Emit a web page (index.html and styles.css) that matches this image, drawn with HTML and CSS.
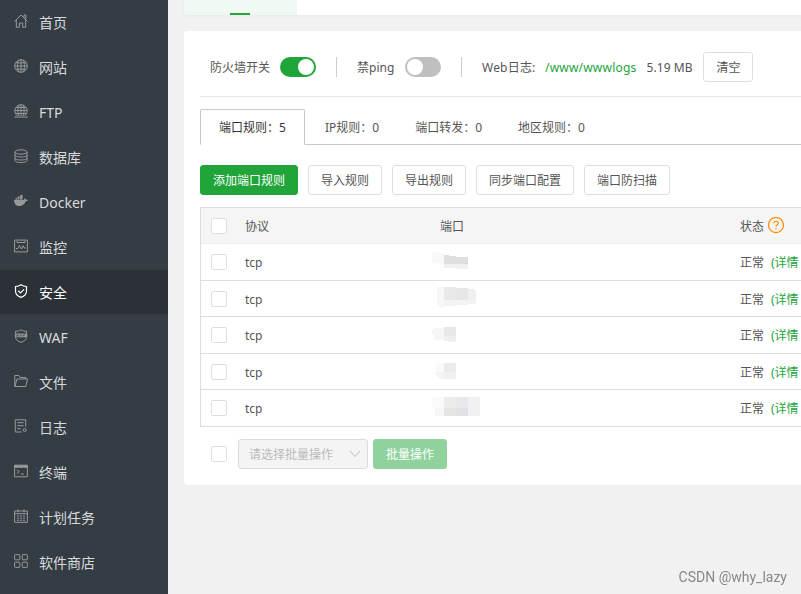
FILE: index.html
```
<!DOCTYPE html>
<html lang="zh-CN">
<head>
    <meta charset="UTF-8">
    <meta name="viewport" content="width=device-width, initial-scale=1.0">
    <title>安全</title>
    <link rel="stylesheet" href="styles.css">
</head>
<body>
    <nav class="sidebar">
        <ul class="menu">
            <li class="menu-item"><svg viewBox="0 0 14 14"><path d="M.7 7.3 7 1l6.3 6.3M2.3 6v7.3h3V9h3.400v4.300h3V6M10 3.600V1h1.800v4.200"/></svg><span>首页</span></li>
            <li class="menu-item"><svg viewBox="0 0 14 14"><circle cx="7" cy="7" r="6.300"/><path d="M7 .7v12.600M.7 7h12.600M1.800 3.800h10.400M1.800 10.200h10.400M5 1C3 4.500 3 9.500 5 13M9 1c2 3.500 2 8.500 0 12"/></svg><span>网站</span></li>
            <li class="menu-item"><svg viewBox="0 0 14 14"><path d="M3.500 12A6.200 6.200 0 1 1 10.500 12M7 .8v11.400M.8 6.500h12.400M2 9.500h10M2.300 3.500h9.400M5 1.200C3.400 4.500 3.400 9 5 12M9 1.200c1.600 3.300 1.600 7.800 0 10.800M.3 13h13.400"/></svg><span>FTP</span></li>
            <li class="menu-item"><svg viewBox="0 0 14 14"><ellipse cx="7" cy="3" rx="6" ry="2.200"/><path d="M1 3v8.500c0 1.200 2.700 2 6 2s6-.8 6-2V3M1 6c0 1.200 2.700 2 6 2s6-.8 6-2M1 9c0 1.200 2.700 2 6 2s6-.8 6-2"/></svg><span>数据库</span></li>
            <li class="menu-item"><svg viewBox="0 0 14 14"><path class="solid" d="M0 6h1.500V4h2V2.500h3V.8h2V6h1.200c.5 0 .8-.8.5-2 .9.400 1.400 1 1.500 1.600 1-.2 1.700 0 2.200.400-.4.900-1.200 1.300-2.300 1.300C10.400 10.600 8.300 12 5.300 12 1.800 12 .2 9.800 0 6z"/><path class="cut" d="M3.500 4v2M5.500 3v3M1.500 5.200h7"/></svg><span>Docker</span></li>
            <li class="menu-item"><svg viewBox="0 0 14 14"><path d="M.6 1.100h12.800v11.800H.6zM3 2v1.500h8V2M2 9.500h2l1.500-3 2 3.500 1.700-3.300 1 2.300H12"/></svg><span>监控</span></li>
            <li class="menu-item active"><svg viewBox="0 0 14 14"><path d="M7 .7c1.600 1.200 3.400 1.700 5.500 1.800v4.700c0 3-2.300 5-5.500 6.200C3.800 12.200 1.500 10.200 1.500 7.200V2.500C3.600 2.400 5.400 1.900 7 .7zM4.200 6.700l2.300 2.200 3.500-3.600"/></svg><span>安全</span></li>
            <li class="menu-item"><svg viewBox="0 0 14 14"><path d="M1.500 4.500V2.300C3.700 2.300 5.400 1.800 7 .8c1.600 1 3.300 1.500 5.500 1.500v2.200M1.500 8.500c.3 2.300 2.400 3.900 5.500 4.900 3.100-1 5.200-2.600 5.500-4.900"/><path class="solid" d="M.8 4.500h12.400v3.800H.8z"/><path class="cut" d="m2 5.500.8 2 .8-2 .8 2 .8-2M6.200 7.500l.8-2 .8 2M9.300 7.500v-2h2M9.300 6.500h1.500"/></svg><span>WAF</span></li>
            <li class="menu-item"><svg viewBox="0 0 14 14"><path d="M.8 12.500V1.500h4l1.500 2h5.400V5M.8 12.500h11L13.500 5H3L.8 12.500"/></svg><span>文件</span></li>
            <li class="menu-item"><svg viewBox="0 0 14 14"><path d="M7.500 13H1.300V.8h10.400v7M3.300 3.700h6.400M3.300 6.700h6.400M3.300 9.700h3.400"/><circle cx="10.700" cy="11" r="1.500"/></svg><span>日志</span></li>
            <li class="menu-item"><svg viewBox="0 0 14 14"><path d="M.6 1.200h12.800v11.600H.6zM3 6l2.300 1.700L3 9.500M6.800 10H10"/><path class="solid" d="M.6 1.200h12.800v2.600H.6z"/></svg><span>终端</span></li>
            <li class="menu-item"><svg viewBox="0 0 14 14"><path d="M.6 2h12.800v11.300H.6zM4 .3v3M10 .3v3M.6 4.700h12.800M3 7h2M6 7h2M9 7h2M3 9.200h2M6 9.200h2M9 9.200h2M3 11.300h2M6 11.300h2M9 11.300h2"/></svg><span>计划任务</span></li>
            <li class="menu-item"><svg viewBox="0 0 14 14"><rect x=".6" y=".6" width="5.200" height="5.200" rx=".7"/><rect x="8.200" y=".6" width="5.200" height="5.200" rx=".7"/><rect x=".6" y="8.200" width="5.200" height="5.200" rx=".7"/><rect x="8.200" y="8.200" width="5.200" height="5.200" rx=".7"/></svg><span>软件商店</span></li>
        </ul>
    </nav>

    <main class="main">
        <div class="top-tabs"><div class="top-tab"></div></div>

        <section class="card">
            <!-- 防火墙开关 -->
            <div class="status-bar">
                <span>防火墙开关</span>
                <i class="switch on"></i>
                <i class="divider"></i>
                <span class="ping">禁ping</span>
                <i class="switch"></i>
                <i class="divider"></i>
                <span class="log-label">Web日志:</span>
                <a class="link log-path">/www/wwwlogs</a>
                <span class="log-size">5.19 MB</span>
                <button class="btn">清空</button>
            </div>

            <div class="tabs">
                <div class="tab active">端口规则：5</div>
                <div class="tab">IP规则：0</div>
                <div class="tab">端口转发：0</div>
                <div class="tab">地区规则：0</div>
            </div>

            <div class="buttons">
                <button class="btn btn-primary">添加端口规则</button>
                <button class="btn">导入规则</button>
                <button class="btn">导出规则</button>
                <button class="btn">同步端口配置</button>
                <button class="btn">端口防扫描</button>
            </div>

            <!-- 端口规则列表 -->
            <div class="table">
                <div class="row head">
                    <i class="checkbox"></i><span>协议</span><span>端口</span>
                    <span class="state">状态<svg class="help" viewBox="0 0 16 16"><circle cx="8" cy="8" r="7.500"/><path d="M5.800 6.300C5.800 3.500 10.300 3.600 10.300 6.200 10.300 7.800 8 7.900 8 9.700M8 11v1.200"/></svg></span>
                </div>
                <div class="row">
                    <i class="checkbox"></i><span>tcp</span>
                    <svg class="mask" viewBox="0 0 60 36"><path fill="#f9f9f8" d="M2 8h5v1h7v12H9v-2H2z"/><path fill="#dfdfe1" d="M14 11h5v1h7v8H14z"/><path fill="#dddee0" d="M26 13h12v7H26z"/><path fill="#f0f0f1" d="M14 20h24v5H26v-1H14z"/></svg>
                    <span>正常<a class="link">(详情</a></span>
                </div>
                <div class="row">
                    <i class="checkbox"></i><span>tcp</span>
                    <svg class="mask" viewBox="0 0 60 36"><path fill="#f7f7f6" d="M7 6h7v20H7z"/><path fill="#e9e9ea" d="M14 6h12v13H14z"/><path fill="#e5e7e7" d="M26 7h12v12H26z"/><path fill="#efefef" d="M38 8h6l2 2v9h-8z"/><path fill="#f2f3f4" d="M14 19h32v4h-8v1H26v1H14z"/></svg>
                    <span>正常<a class="link">(详情</a></span>
                </div>
                <div class="row">
                    <i class="checkbox"></i><span>tcp</span>
                    <svg class="mask" viewBox="0 0 60 36"><path fill="#f6f6f5" d="M5 11h9v12H5v-4l-3-2v-4z"/><path fill="#e8e8e8" d="M14 10h12v9H14z"/><path fill="#eee" d="M14 19h12v6h-7v-1h-5z"/></svg>
                    <span>正常<a class="link">(详情</a></span>
                </div>
                <div class="row">
                    <i class="checkbox"></i><span>tcp</span>
                    <svg class="mask" viewBox="0 0 60 36"><path fill="#fafaf9" d="M6 9h8v9H6z"/><path fill="#eaecec" d="M14 9h12v9H14z"/><path fill="#f4f4f4" d="M5 18h9v7h-4l-4-4z"/><path fill="#eff0f2" d="M14 18h12v7H14z"/></svg>
                    <span>正常<a class="link">(详情</a></span>
                </div>
                <div class="row">
                    <i class="checkbox"></i><span>tcp</span>
                    <svg class="mask" viewBox="0 0 60 36"><path fill="#fafafa" d="M2 7h12v11H5v1H2z"/><path fill="#ececeb" d="M14 7h12v11H14z"/><path fill="#e8e9ec" d="M26 7h12v11H26z"/><path fill="#f1f1f2" d="M38 7h12v19H38z"/><path fill="#f6f6f5" d="M5 18h9v8H5z"/><path fill="#e5e5e6" d="M14 18h12v8H14z"/><path fill="#dfe1e4" d="M26 18h12v8H26z"/></svg>
                    <span>正常<a class="link">(详情</a></span>
                </div>
            </div>

            <div class="batch">
                <i class="checkbox"></i>
                <div class="select"><span>请选择批量操作</span><svg viewBox="0 0 12 8"><path d="m1 1 5 5.500L11 1"/></svg></div>
                <button class="btn btn-primary disabled">批量操作</button>
            </div>
        </section>
    </main>

    <div class="watermark">CSDN @why_lazy</div>
</body>
</html>
```
FILE: styles.css
```
* {
    box-sizing: border-box;
}

body {
    margin: 0;
    height: 594px;
    display: flex;
    overflow: hidden;
    background: #f1f1f1;
    color: #555;
    font: 12px/18px "Noto Sans", "Noto Sans CJK SC", sans-serif;
}

.sidebar {
    width: 168px;
    flex: none;
    background: #353d44;
}

.menu {
    list-style: none;
    margin: 0;
    padding: 0;
}

.menu-item {
    height: 44px;
    margin-bottom: 1px;
    padding-left: 14px;
    display: flex;
    align-items: center;
    gap: 11px;
    color: #d8dadb;
    font-size: 14px;
    line-height: 20px;
}

.menu-item span {
    padding-top: 2px;
}

.menu-item svg {
    width: 14px;
    height: 14px;
    margin-bottom: 2px;
    fill: none;
    stroke: #999;
    stroke-width: 1;
}

.menu-item .solid {
    fill: #999;
    stroke: none;
}

.menu-item .cut {
    stroke: #353d44;
    stroke-width: 0.5;
}

.menu-item.active {
    background: #2c3138;
    color: #fff;
}

.menu-item.active svg {
    stroke: #fff;
    stroke-width: 1.2;
}

.main {
    flex: 1;
    min-width: 0;
    padding-left: 16px;
}

.top-tabs {
    height: 15px;
    background: #fff;
    border-radius: 0 0 0 4px;
    box-shadow: 0 1px 4px rgba(0, 0, 0, 0.04);
}

.top-tab {
    width: 113px;
    height: 15px;
    padding-right: 1px;
    display: flex;
    align-items: flex-end;
    justify-content: center;
    background: #f0f9f2;
    border-bottom-left-radius: 4px;
}

.top-tab::after {
    content: '';
    width: 20px;
    height: 2px;
    background: #20a53a;
}

.card {
    height: 454px;
    margin-top: 16px;
    padding-left: 16px;
    background: #fff;
    border-radius: 4px 0 0 4px;
}

.status-bar {
    height: 66px;
    padding: 7px 0 0 10px;
    display: flex;
    align-items: center;
    border-bottom: 1px solid #e8e8e8;
}

.status-bar span,
.status-bar a {
    padding-top: 2px;
}

.ping {
    width: 38px;
}

.switch {
    width: 36px;
    height: 20px;
    margin-left: 10px;
    padding: 2px;
    display: flex;
    border-radius: 10px;
    background: #bfbfbf;
}

.switch::after {
    content: '';
    width: 16px;
    height: 16px;
    border-radius: 50%;
    background: #fff;
}

.switch.on {
    justify-content: flex-end;
    background: #20a53a;
}

.divider {
    width: 1px;
    height: 20px;
    margin: 0 20px;
    background: #ccc;
}

.link {
    color: #20a53a;
}

.log-label {
    width: 56px;
    letter-spacing: 0.2px;
}

.log-path {
    margin-left: 7px;
    letter-spacing: 0.2px;
}

.log-size {
    width: 47px;
    margin: 0 10px;
    white-space: nowrap;
    letter-spacing: 0.1px;
}

.btn {
    height: 30px;
    padding: 2px 12px 0;
    flex: none;
    border: 1px solid #dcdfe6;
    border-radius: 3px;
    background: #fff;
    color: #555;
    font: inherit;
}

.btn-primary {
    border-color: #20a53a;
    background: #20a53a;
    color: #fff;
}

.btn-primary.disabled {
    border-color: #90d29d;
    background: #90d29d;
}

.tabs {
    height: 36px;
    margin-top: 12px;
    display: flex;
    border-bottom: 1px solid #c9c6d6;
}

.tab {
    height: 36px;
    padding: 0 16px 0 20px;
    line-height: 38px;
    white-space: nowrap;
}

.tab.active {
    width: 105px;
    padding: 0 0 0 18px;
    line-height: 36px;
    border: 1px solid #c9c6d6;
    border-bottom-color: #fff;
    border-radius: 2px 2px 0 0;
    background: #fff;
    color: #333;
}

.buttons {
    margin-top: 20px;
    display: flex;
    gap: 10px;
}

.table {
    margin-top: 12px;
    border: 1px solid #ddd;
    border-width: 1px 0 0 1px;
}

.row {
    height: 36.6px;
    display: grid;
    grid-template-columns: 34px 195px 300px 1fr;
    align-items: center;
    padding-left: 10px;
    border-bottom: 1px solid #ddd;
    white-space: nowrap;
}

.row.head {
    height: 36px;
    background: #f5f5f6;
    border-bottom-color: #ebeef5;
}

.row span {
    padding-top: 2px;
}

.row .link {
    margin-left: 7px;
}

.checkbox {
    width: 16px;
    height: 16px;
    border: 1px solid #dcdfe6;
    border-radius: 2px;
    background: #fff;
}

.state {
    display: flex;
    align-items: center;
}

.help {
    width: 16px;
    height: 16px;
    margin: -3px 0 0 4px;
    fill: none;
    stroke: #ff8a00;
    stroke-width: 1.2;
}

.mask {
    width: 60px;
    height: 36px;
    margin-left: -10px;
    align-self: start;
}

.batch {
    margin-top: 12px;
    padding-left: 11px;
    display: flex;
    align-items: center;
}

.select {
    width: 130px;
    height: 30px;
    margin: 0 5px 0 11px;
    padding: 0 6px 0 10px;
    display: flex;
    align-items: center;
    justify-content: space-between;
    border: 1px solid #dcdcdc;
    border-radius: 3px;
    background: #f4f4f4;
    color: #bbb;
}

.select span {
    padding-top: 2px;
}

.select svg {
    width: 12px;
    height: 8px;
    fill: none;
    stroke: #bbb;
}

.watermark {
    position: fixed;
    right: 14px;
    bottom: 8px;
    color: #888;
    font: 14px/18px Roboto, "Liberation Sans", sans-serif;
}
```
